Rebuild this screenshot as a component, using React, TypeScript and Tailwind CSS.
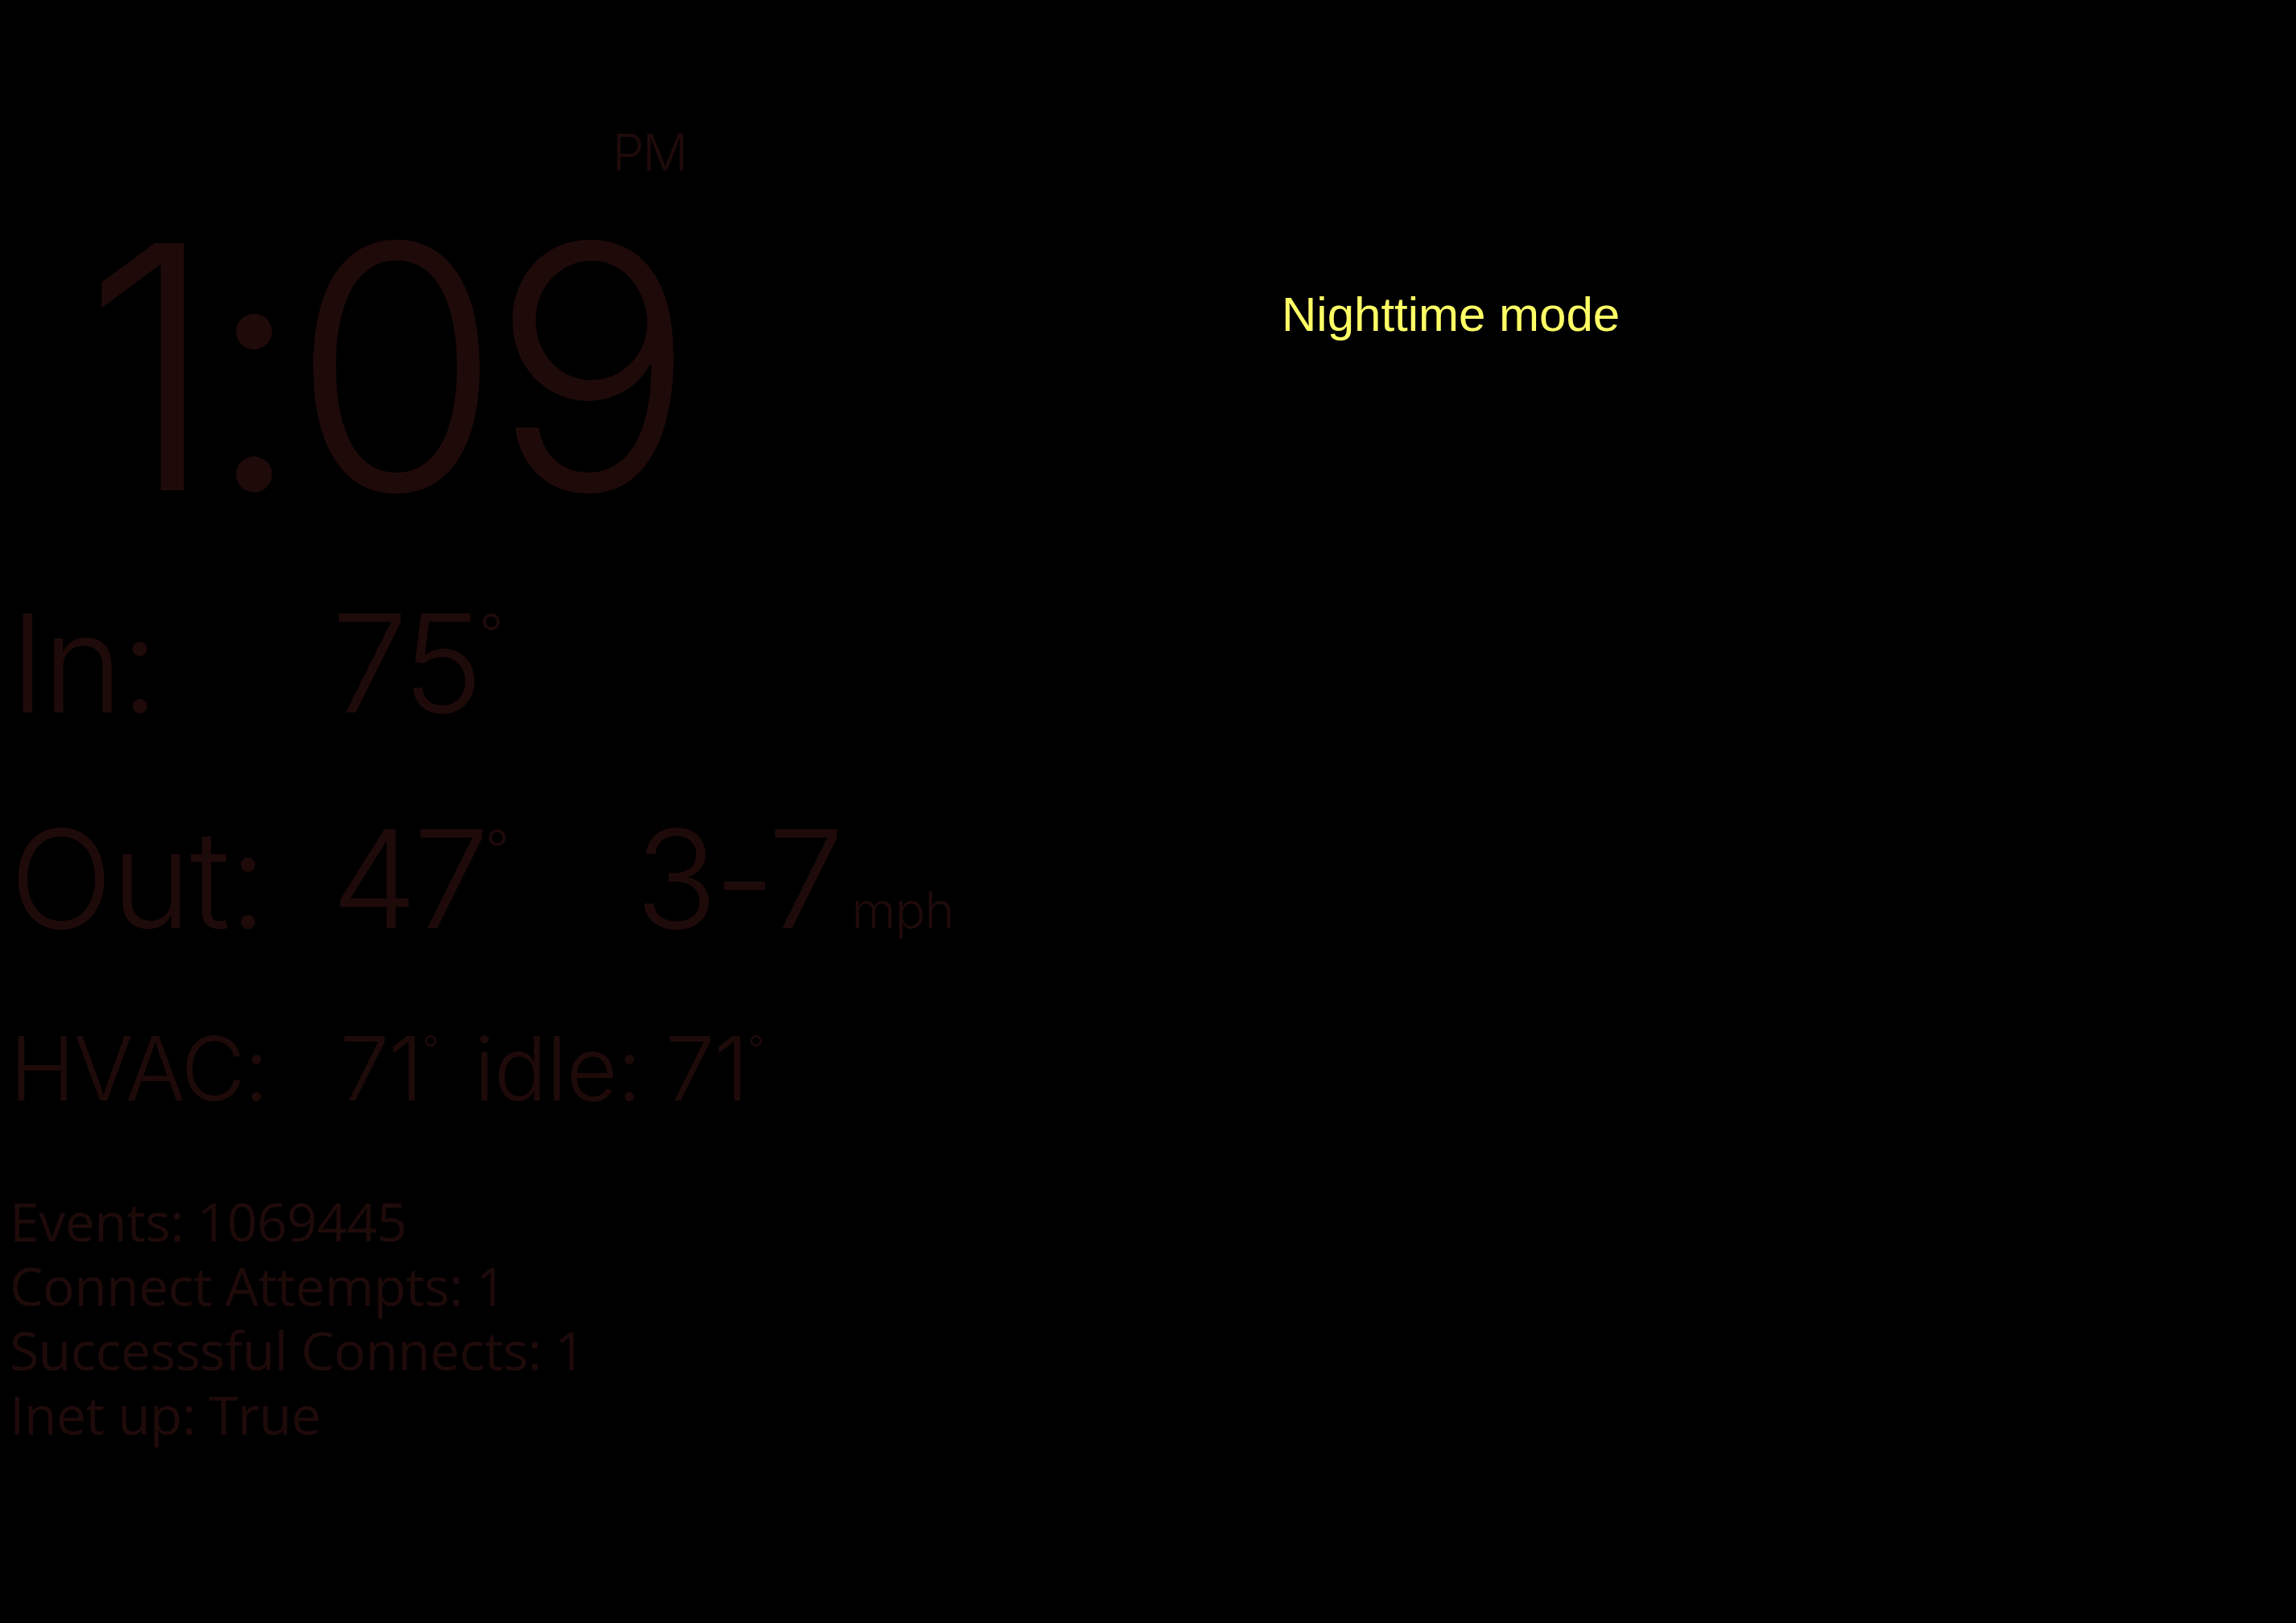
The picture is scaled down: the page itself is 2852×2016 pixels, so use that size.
import React from 'react';

const dim = 'text-[#1f0a0a]';

const Deg = ({ big }: { big?: boolean }) =>
  big ? (
    <span className="inline-block align-top mt-[14px] text-[66px] leading-none tracking-normal">°</span>
  ) : (
    <span className="inline-block align-top mt-[8px] text-[44px] leading-none tracking-normal">°</span>
  );

export default function App() {
  const stats = [
    'Events: 1069445',
    'Connect Attempts: 1',
    'Successsful Connects: 1',
    'Inet up: True',
  ];

  return (
    <div className="w-[2852px] h-[2016px] bg-black flex overflow-hidden">
      {/* left panel: clock + readings */}
      <div className={`w-[1590px] pl-[12px] pt-[158px] flex flex-col font-light ${dim}`} style={{ fontFamily: 'Inter, "Liberation Sans", sans-serif' }}>
        <div className="inline-flex flex-col items-end self-start ml-[91px]">
          <div className="text-[63px] leading-none tracking-[-2px] -mr-[2px]">PM</div>
          <div className="text-[422px] leading-none mt-[24px] tracking-[-13px]">1:09</div>
        </div>

        <div className="flex items-start mt-[72px] text-[169px] leading-none">
          <span className="w-[400px] tracking-[-3px]">In:</span>
          <span className="tracking-[-5px]">
            75
            <Deg big />
          </span>
        </div>

        <div className="flex items-start mt-[99px] text-[169px] leading-none">
          <span className="w-[400px] tracking-[-2px]">Out:</span>
          <span className="w-[377px] tracking-[-5px]">
            47
            <Deg big />
          </span>
          <span className="flex items-baseline tracking-[-5px]">
            3-7
            <span className="text-[63px] ml-[14px] tracking-[-1px]">mph</span>
          </span>
        </div>

        <div className="flex items-start mt-[96px] text-[110px] leading-none">
          <span className="w-[410px] tracking-[-2px]">HVAC:</span>
          <span className="tracking-[-1px]">
            71
            <Deg />
            <span className="ml-[44px]">idle: 71</span>
            <Deg />
          </span>
        </div>

        <div className="mt-[94px] text-[66px] leading-[80px] font-normal tracking-[-0.5px]" style={{ fontFamily: '"Open Sans", "Liberation Sans", sans-serif' }}>
          {stats.map((s) => (
            <div key={s}>{s}</div>
          ))}
        </div>
      </div>

      {/* right panel: mode banner */}
      <div className="flex-1 pt-[361px] pl-[2px]">
        <div className="text-[60px] leading-none text-[#ffff66]" style={{ fontFamily: '"Liberation Sans", Arial, sans-serif' }}>
          Nighttime mode
        </div>
      </div>
    </div>
  );
}
